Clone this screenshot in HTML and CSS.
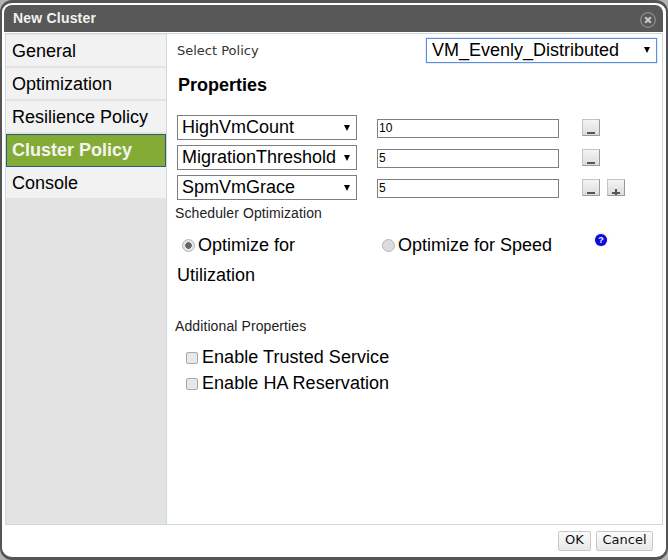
FILE: index.html
```html
<!DOCTYPE html>
<html lang="en">
<head>
    <meta charset="UTF-8">
    <title>New Cluster</title>
    <link rel="stylesheet" href="styles.css">
</head>
<body>
    <div class="dialog">
        <div class="header">
            <span class="title">New Cluster</span>
            <svg class="close" width="16" height="16" viewBox="0 0 16 16">
                <circle cx="8" cy="8" r="7.3" fill="none" stroke="#8f8f8f" stroke-width="1.2"/>
                <path d="M5.2 5.2l5.6 5.6M10.8 5.2l-5.6 5.6" stroke="#c8c8c8" stroke-width="2.2"/>
            </svg>
        </div>

        <div class="content">
            <!-- Side tabs -->
            <div class="sidebar">
                <div class="tab">General</div>
                <div class="tab">Optimization</div>
                <div class="tab">Resilience Policy</div>
                <div class="tab active">Cluster Policy</div>
                <div class="tab">Console</div>
            </div>

            <div class="main">
                <div class="policy-row">
                    <span class="policy-label">Select Policy</span>
                    <div class="select policy-select"><span>VM_Evenly_Distributed</span><i class="arrow"></i></div>
                </div>
                <div class="properties-title">Properties</div>

                <div class="prop-rows">
                    <div class="prop-row">
                        <div class="select prop-select"><span>HighVmCount</span><i class="arrow"></i></div>
                        <div class="text-input">10</div>
                        <div class="btn-icon minus"></div>
                    </div>
                    <div class="prop-row">
                        <div class="select prop-select"><span>MigrationThreshold</span><i class="arrow"></i></div>
                        <div class="text-input">5</div>
                        <div class="btn-icon minus"></div>
                    </div>
                    <div class="prop-row">
                        <div class="select prop-select"><span>SpmVmGrace</span><i class="arrow"></i></div>
                        <div class="text-input">5</div>
                        <div class="btn-icon minus"></div>
                        <div class="btn-icon plus"></div>
                    </div>
                </div>

                <div class="section-label">Scheduler Optimization</div>
                <div class="radio-group">
                    <div class="radio-cell">
                        <i class="radio checked"></i>Optimize for Utilization
                    </div>
                    <div class="radio-cell speed">
                        <i class="radio"></i>Optimize for Speed
                    </div>
                    <div class="help">?</div>
                </div>

                <div class="section-label">Additional Properties</div>
                <div class="check-row"><i class="checkbox"></i>Enable Trusted Service</div>
                <div class="check-row"><i class="checkbox"></i>Enable HA Reservation</div>
            </div>
        </div>

        <div class="footer">
            <div class="btn btn-ok">OK</div>
            <div class="btn btn-cancel">Cancel</div>
        </div>
    </div>
</body>
</html>
```

FILE: styles.css
```css
html, body {
    margin: 0;
    height: 100%;
    background: #b4b4b4;
}
body {
    font-family: "Liberation Sans", Arial, sans-serif;
    color: #000;
}
.dialog {
    box-sizing: border-box;
    width: 668px;
    height: 560px;
    background: #fff;
    border: 2px solid #555;
    border-top-width: 3px;
    border-bottom-width: 3px;
    border-radius: 12px;
    padding: 2px 3px 0 3px;
    display: flex;
    flex-direction: column;
}
.header {
    height: 27px;
    flex: none;
    margin-left: -1px;
    background: #585858;
    border-radius: 8px 8px 0 0;
    display: flex;
    align-items: center;
    justify-content: space-between;
    padding: 0 7px 0 9px;
    color: #f2f2f2;
}
.title {
    font-size: 14px;
    font-weight: bold;
    letter-spacing: 0.2px;
    margin-top: -1px;
}
.close {
    margin-top: 3px;
}
.content {
    height: 492px;
    flex: none;
    box-sizing: border-box;
    margin-top: 1px;
    border: 1px solid #c9d9df;
    display: flex;
}
.sidebar {
    width: 160px;
    flex: none;
    background: #e3e3e3;
    border-right: 1px solid #c9d9df;
    padding-top: 1px;
}
.tab {
    box-sizing: border-box;
    height: 33px;
    background: #f2f2f2;
    font-size: 18px;
    line-height: 33px;
    padding-left: 6px;
    border-bottom: 2px solid #e3e3e3;
}
.tab.active {
    background: #84ab34;
    color: #f4f4f4;
    font-weight: bold;
    border: 1px solid #2f5a78;
    padding-left: 5px;
    line-height: 30px;
    height: 33px;
}
.main {
    flex: 1;
    position: relative;
    padding: 0 5px 0 10px;
}
.policy-row {
    display: flex;
    justify-content: space-between;
    align-items: center;
    height: 32px;
}
.policy-label {
    font-family: "DejaVu Sans", sans-serif;
    font-size: 13px;
    color: #333;
}
.select {
    box-sizing: border-box;
    display: flex;
    justify-content: space-between;
    align-items: center;
    background: #fff;
    font-size: 18px;
    border: 1px solid #7f7f7f;
    padding-left: 4px;
}
.policy-select {
    width: 231px;
    height: 25px;
    padding-left: 5px;
    border-color: #5b8de0;
    box-shadow: 0 0 1px #5b8de0;
}
.prop-select {
    width: 180px;
    height: 25px;
}
.arrow {
    width: 0;
    height: 0;
    margin-right: 6px;
    border-left: 3px solid transparent;
    border-right: 3px solid transparent;
    border-top: 6px solid #000;
}
.properties-title {
    font-size: 18px;
    font-weight: bold;
    margin: 9px 0 0 1px;
    height: 21px;
}
.prop-rows {
    margin-top: 19px;
}
.prop-row {
    display: flex;
    align-items: center;
    height: 25px;
    margin-bottom: 5px;
}
.text-input {
    box-sizing: border-box;
    width: 182px;
    height: 19px;
    margin-left: 20px;
    border: 1px solid #7f7f7f;
    font-size: 12px;
    line-height: 17px;
    padding-left: 1px;
    margin-top: 2px;
}
.btn-icon {
    box-sizing: border-box;
    width: 18px;
    height: 17px;
    margin-left: 23px;
    border: 1px solid #c4c4c4;
    border-bottom-color: #9a9a9a;
    border-right-color: #9a9a9a;
    background: linear-gradient(#f4f4f4, #dcdcdc);
    position: relative;
}
.btn-icon + .btn-icon {
    margin-left: 7px;
}
.btn-icon::before {
    content: "";
    position: absolute;
    left: 4px;
    bottom: 1px;
    width: 8px;
    height: 2px;
    background: #555;
}
.plus::after {
    content: "";
    position: absolute;
    left: 7px;
    bottom: 0;
    width: 2px;
    height: 6px;
    background: #555;
}
.section-label {
    font-size: 14px;
    letter-spacing: 0.1px;
    color: #222;
    margin-left: -2px;
    height: 16px;
    line-height: 16px;
}
.radio-group {
    display: flex;
    margin-top: 9px;
    height: 88px;
    font-size: 18px;
    line-height: 30px;
    align-items: flex-start;
}
.radio-cell {
    box-sizing: border-box;
    width: 205px;
    flex: none;
    padding-right: 60px;
    text-indent: 5px;
}
.radio-cell.speed {
    width: 213px;
    padding-right: 0;
    text-indent: 0;
}
.radio {
    display: inline-block;
    box-sizing: border-box;
    width: 13px;
    height: 13px;
    margin-right: 3px;
    border-radius: 50%;
    border: 1px solid #b5b5b5;
    background: #dcdcdc;
    vertical-align: -1px;
}
.radio.checked {
    background: radial-gradient(circle, #666 0 3px, #e4e4e4 3.5px);
}
.help {
    width: 12px;
    height: 12px;
    margin-top: 4px;
    border-radius: 50%;
    background: #0a0adf;
    box-shadow: 0 0 2px #aab;
    color: #fff;
    font-size: 9px;
    font-weight: bold;
    line-height: 12px;
    text-align: center;
}
.check-row {
    font-size: 18px;
    letter-spacing: 0.05px;
    height: 26px;
    line-height: 26px;
    padding-left: 9px;
}
.section-label + .check-row {
    margin-top: 10px;
}
.checkbox {
    display: inline-block;
    box-sizing: border-box;
    width: 12px;
    height: 12px;
    margin-right: 4px;
    border: 1px solid #a8a8a8;
    border-radius: 2px;
    background: #e8e8e8;
    vertical-align: -1px;
}
.footer {
    flex: 1;
    display: flex;
    justify-content: flex-end;
    gap: 5px;
    padding: 6px 10px 0 0;
}
.btn {
    box-sizing: border-box;
    height: 20px;
    font-family: "DejaVu Sans", sans-serif;
    font-size: 13px;
    line-height: 15px;
    text-align: center;
    color: #111;
    border: 1px solid #c8c8c8;
    border-radius: 2px;
    background: linear-gradient(#fbfbfb, #e8e8e8);
}
.btn-ok {
    width: 33px;
}
.btn-cancel {
    width: 57px;
}
```
